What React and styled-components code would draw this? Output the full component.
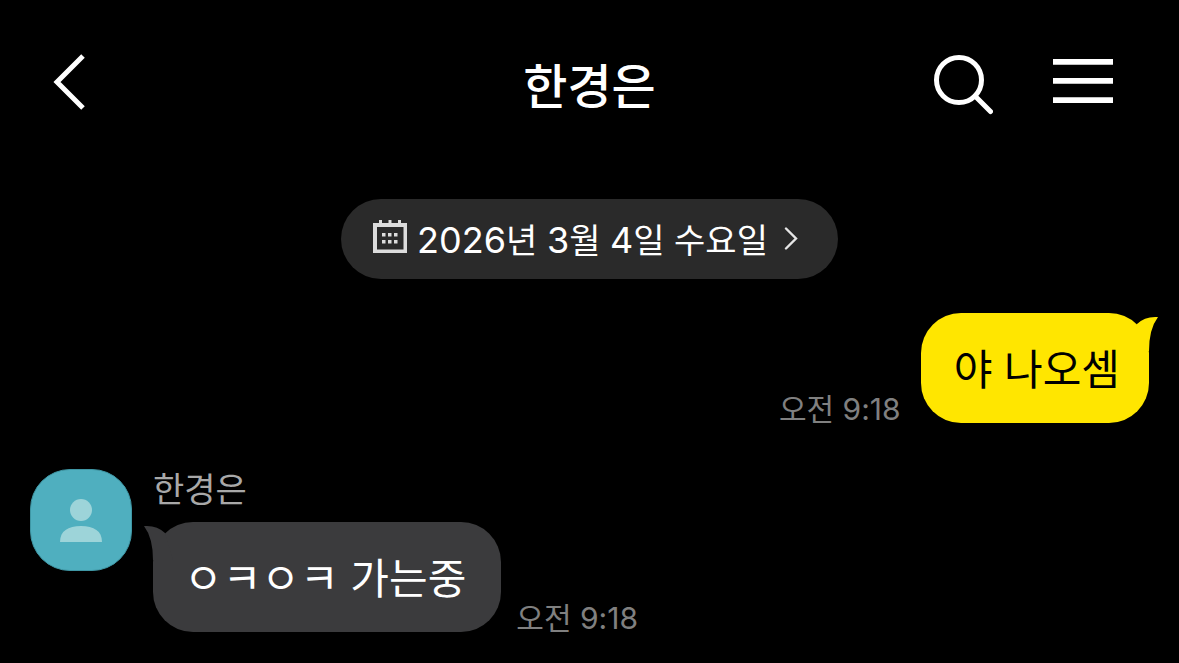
import styled, { createGlobalStyle, css } from "styled-components";

const messages = [
  { id: 1, mine: true, text: "야 나오셈", time: "오전 9:18" },
  { id: 2, mine: false, name: "한경은", text: "ㅇㅋㅇㅋ 가는중", time: "오전 9:18" },
];

export default function App() {
  return (
    <>
      <GlobalStyle />
      <Header>
        <IconButton type="button" aria-label="뒤로">
          <BackIcon />
        </IconButton>
        <Title>한경은</Title>
        <HeaderActions>
          <IconButton type="button" aria-label="검색">
            <SearchIcon />
          </IconButton>
          <IconButton type="button" aria-label="메뉴">
            <MenuIcon />
          </IconButton>
        </HeaderActions>
      </Header>
      <Chat>
        <DateButton type="button">
          <CalendarIcon />
          <DateLabel>
            <Digits>2026</Digits>년 <Digits>3</Digits>월 <Digits>4</Digits>일 수요일
          </DateLabel>
          <ChevronIcon />
        </DateButton>
        <MessageList>
          {messages.map((message) => (
            <Message key={message.id} {...message} />
          ))}
        </MessageList>
      </Chat>
    </>
  );
}

function Message({ mine, name, text, time }) {
  return (
    <MessageItem $mine={mine}>
      {!mine && (
        <Avatar>
          <PersonIcon />
        </Avatar>
      )}
      <MessageBody>
        {name && <Sender>{name}</Sender>}
        <BubbleRow $mine={mine}>
          <Bubble $mine={mine}>
            {text}
            <Tail $mine={mine} viewBox="0 0 30 38" aria-hidden="true">
              <path d="M8 11Q16 3 29 4Q20 16 20 38L0 38Z" />
            </Tail>
          </Bubble>
          <Time>{time}</Time>
        </BubbleRow>
      </MessageBody>
    </MessageItem>
  );
}

function BackIcon() {
  return (
    <svg width="34" height="56" viewBox="0 0 34 56" fill="none" aria-hidden="true">
      <path d="M31 2L5 28L31 54" stroke="#fff" strokeWidth="5" />
    </svg>
  );
}

function SearchIcon() {
  return (
    <svg width="60" height="68" viewBox="0 0 60 68" fill="none" stroke="#fff" aria-hidden="true">
      <circle cx="26" cy="32" r="22.500" strokeWidth="5" />
      <path d="M42 48L57.500 63.500" strokeWidth="5" strokeLinecap="round" />
    </svg>
  );
}

function MenuIcon() {
  return (
    <svg width="60" height="46" viewBox="0 0 60 46" fill="#fff" aria-hidden="true">
      <path d="M0 0H60V5.700H0ZM0 19H60V24.700H0ZM0 38.300H60V44H0Z" />
    </svg>
  );
}

function CalendarIcon() {
  return (
    <svg width="34" height="38" viewBox="0 0 34 38" fill="#dcdcdc" aria-hidden="true">
      <path
        fillRule="evenodd"
        d="M0 3H6V0H9V3H15.500V0H18.500V3H25V0H28V3H34V33H0ZM4 7V29.500H30.500V7Z"
      />
      <path d="M9 13H12.500V16.500H9ZM15 13H18.500V16.500H15ZM21 13H24.500V16.500H21ZM9 20H12.500V23.500H9ZM15 20H18.500V23.500H15ZM21 20H24.500V23.500H21Z" />
    </svg>
  );
}

function ChevronIcon() {
  return (
    <svg width="14" height="24" viewBox="0 0 14 24" fill="none" aria-hidden="true">
      <path d="M2 1.500L12 11.500L2 21.500" stroke="#e6e6e6" strokeWidth="2.400" strokeLinecap="round" />
    </svg>
  );
}

function PersonIcon() {
  return (
    <svg width="42" height="44" viewBox="0 0 42 44" fill="#9dd4d9" aria-hidden="true">
      <circle cx="21" cy="12" r="11" />
      <path d="M0 44C0 33 8 28 21 28S42 33 42 44Z" />
    </svg>
  );
}

const GlobalStyle = createGlobalStyle`
  * {
    box-sizing: border-box;
  }

  body {
    margin: 0;
    background: #000;
    color: #fff;
    font-family: Inter, "Noto Sans CJK KR", sans-serif;
  }

  svg {
    display: block;
    flex-shrink: 0;
  }

  button {
    border: none;
    color: inherit;
    font-family: inherit;
    cursor: pointer;
  }
`;

const Header = styled.header`
  display: grid;
  grid-template-columns: 1fr auto 1fr;
  align-items: center;
  height: 168px;
  padding: 0 52px 4px;
`;

const Title = styled.h1`
  margin: 0;
  padding-top: 10px;
  font-size: 48px;
  font-weight: 500;
  line-height: 64px;
`;

const HeaderActions = styled.div`
  display: flex;
  justify-content: flex-end;
  align-items: center;
  gap: 60px;
  padding-right: 14px;
`;

const IconButton = styled.button`
  justify-self: start;
  padding: 0;
  background: none;
`;

const Chat = styled.main`
  padding: 31px 30px;
`;

const DateButton = styled.button`
  display: flex;
  align-items: center;
  gap: 10px;
  height: 80px;
  margin: 0 auto 34px;
  padding: 0 40px 0 32px;
  border-radius: 40px;
  background: #2a2a2a;

  & svg:last-child {
    margin-left: 6px;
  }
`;

const DateLabel = styled.span`
  padding-top: 2px;
  font-size: 34px;
  line-height: 48px;
`;

const Digits = styled.span`
  font-size: 36px;
`;

const MessageList = styled.ul`
  display: flex;
  flex-direction: column;
  gap: 46px;
  margin: 0;
  padding: 0;
  list-style: none;
`;

const MessageItem = styled.li`
  display: flex;
  gap: 21px;
  justify-content: ${({ $mine }) => ($mine ? "flex-end" : "flex-start")};
`;

const Avatar = styled.div`
  display: flex;
  justify-content: center;
  align-items: center;
  width: 102px;
  height: 102px;
  border: 1px solid #3f97a5;
  border-radius: 40px;
  background: #4fafbf;
`;

const MessageBody = styled.div`
  display: flex;
  flex-direction: column;
`;

const Sender = styled.span`
  height: 53px;
  color: #a8a8a8;
  font-size: 34px;
  line-height: 42px;
`;

const BubbleRow = styled.div`
  display: flex;
  align-items: flex-end;
  gap: ${({ $mine }) => ($mine ? "20px" : "15px")};
  flex-direction: ${({ $mine }) => ($mine ? "row-reverse" : "row")};
`;

const Bubble = styled.div`
  position: relative;
  padding: ${({ $mine }) => ($mine ? "27px 29px 23px 33px" : "27px 35px 23px 31px")};
  border-radius: 40px;
  background: ${({ $mine }) => ($mine ? "#ffe600" : "#3b3b3d")};
  color: ${({ $mine }) => ($mine ? "#000" : "#fff")};
  font-size: 42px;
  line-height: 60px;
`;

const Tail = styled.svg`
  position: absolute;
  top: 0;
  width: 30px;
  height: 38px;

  ${({ $mine }) =>
    $mine
      ? css`
          right: -10px;
          fill: #ffe600;
        `
      : css`
          left: -10px;
          fill: #3b3b3d;
          transform: scaleX(-1);
        `}
`;

const Time = styled.time`
  color: #808080;
  font-size: 30px;
  line-height: 28px;
`;
